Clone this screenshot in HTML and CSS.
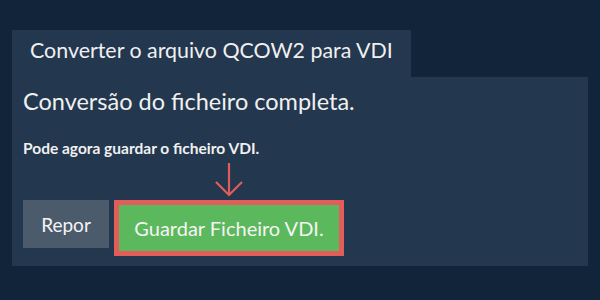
FILE: index.html
```html
<!DOCTYPE html>
<html lang="pt">
<head>
<meta charset="utf-8">
<title>Converter o arquivo QCOW2 para VDI</title>
<link rel="stylesheet" href="styles.css">
</head>
<body>
<div class="wrap">
  <div class="tab">Converter o arquivo QCOW2 para VDI</div>
  <div class="panel">
    <h1 class="title">Conversão do ficheiro completa.</h1>
    <p class="note">Pode agora guardar o ficheiro VDI.</p>
    <div class="actions">
      <button class="btn btn-reset">Repor</button>
      <div class="save-wrap">
        <svg class="arrow" width="30" height="36" viewBox="0 0 30 36" aria-hidden="true">
          <path d="M15 1 V33 M2 20 L15 33 L28 20" fill="none" stroke="#e05d59" stroke-width="2.2"/>
        </svg>
        <button class="btn btn-save">Guardar Ficheiro VDI.</button>
      </div>
    </div>
  </div>
</div>
</body>
</html>
```
FILE: styles.css
```css
html, body {
  margin: 0;
  padding: 0;
  background: #12243a;
  font-family: Lato, "Open Sans", sans-serif;
  color: #f0f0f0;
}
.wrap {
  padding: 30px 12px 0 12px;
  width: 576px;
}
.tab {
  display: inline-block;
  box-sizing: border-box;
  height: 47px;
  padding: 7px 18px 0 18px;
  background: #23374e;
  font-size: 21.4px;
  line-height: 26px;
}
.panel {
  background: #23374e;
  padding: 10px 11px 10px 11px;
}
.title {
  margin: 0;
  font-size: 23.5px;
  font-weight: 400;
  line-height: 29px;
}
.note {
  margin: 23px 0 0 0;
  font-size: 15.5px;
  font-weight: 700;
  line-height: 19px;
}
.actions {
  display: flex;
  align-items: flex-start;
  gap: 5px;
  margin-top: 42px;
}
.btn {
  border: 0;
  margin: 0;
  font-family: Lato, "Open Sans", sans-serif;
  color: #f4f4f4;
  cursor: pointer;
}
.btn-reset {
  width: 86px;
  height: 48px;
  background: #4c5b6c;
  font-size: 19px;
}
.save-wrap {
  position: relative;
}
.btn-save {
  display: block;
  box-sizing: content-box;
  width: 220px;
  height: 46px;
  background: #5cb85c;
  border: 5px solid #e05d59;
  font-size: 20px;
  padding: 0;
}
.arrow {
  position: absolute;
  left: 100px;
  top: -38px;
}
```
